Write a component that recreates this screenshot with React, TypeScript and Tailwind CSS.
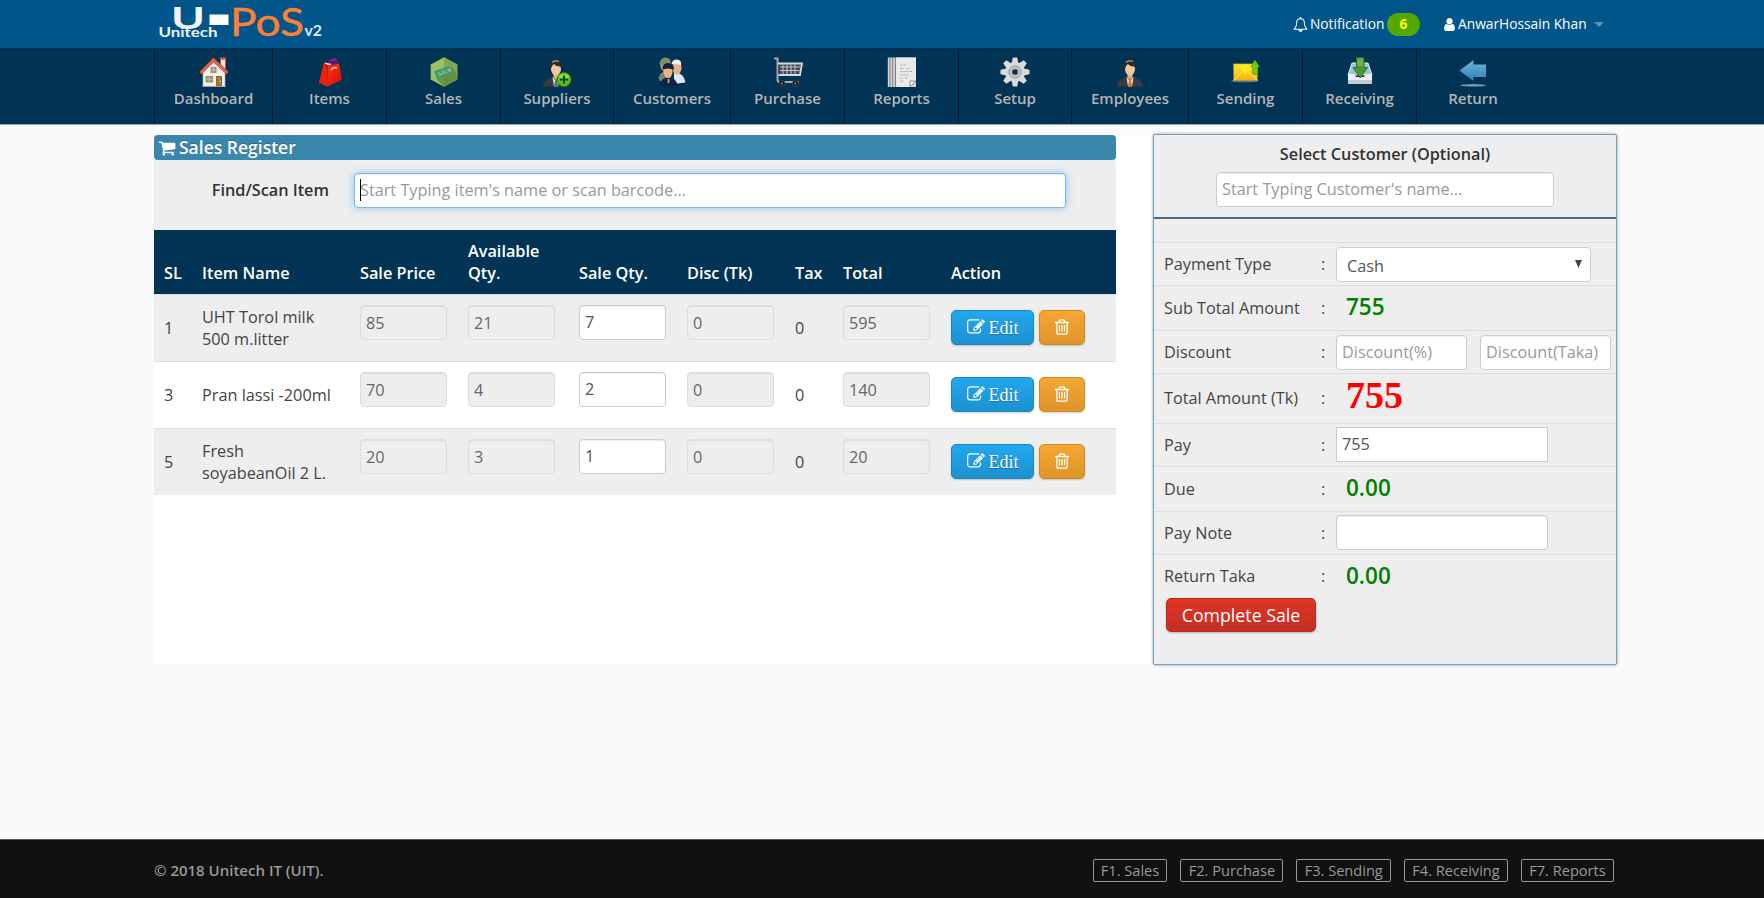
import React from "react";

type Children = { children?: React.ReactNode };

function Glyph({ d, className, box = "0 0 1792 1792" }: { d: string; className: string; box?: string }) {
  return (
    <svg viewBox={box} className={className} fill="currentColor">
      <path d={d} />
    </svg>
  );
}

const EDIT =
  "M888 1184l116-116-152-152-116 116v56h96v96h56zm440-720q-16-16-33 1l-350 350q-17 17-1 33t33-1l350-350q17-17 1-33zm80 594v190q0 119-84.5 203.5t-203.5 84.5h-832q-119 0-203.5-84.5t-84.5-203.5v-832q0-119 84.5-203.5t203.5-84.5h832q63 0 117 25 15 7 18 23 3 17-9 29l-49 49q-14 14-32 8-23-6-45-6h-832q-66 0-113 47t-47 113v832q0 66 47 113t113 47h832q66 0 113-47t47-113v-126q0-13 9-22l64-64q15-15 35-7t20 29zm-96-738l288 288-672 672h-288v-288zm444 132l-92 92-288-288 92-92q28-28 68-28t68 28l152 152q28 28 28 68t-28 68z";
const TRASH =
  "M704 736v576q0 14-9 23t-23 9h-64q-14 0-23-9t-9-23v-576q0-14 9-23t23-9h64q14 0 23 9t9 23zm256 0v576q0 14-9 23t-23 9h-64q-14 0-23-9t-9-23v-576q0-14 9-23t23-9h64q14 0 23 9t9 23zm256 0v576q0 14-9 23t-23 9h-64q-14 0-23-9t-9-23v-576q0-14 9-23t23-9h64q14 0 23 9t9 23zm128 724v-948h-896v948q0 22 7 40.5t14.5 27 10.5 8.5h832q3 0 10.5-8.5t14.5-27 7-40.5zm-672-1076h448l-48-117q-7-9-17-11h-317q-10 2-17 11zm928 32v64q0 14-9 23t-23 9h-96v948q0 83-47 143.5t-113 60.5h-832q-66 0-113-58.5t-47-141.5v-952h-96q-14 0-23-9t-9-23v-64q0-14 9-23t23-9h309l70-167q15-37 54-63t79-26h320q40 0 79 26t54 63l70 167h309q14 0 23 9t9 23z";
const CART =
  "M704 1536q0 52-38 90t-90 38-90-38-38-90 38-90 90-38 90 38 38 90zm896 0q0 52-38 90t-90 38-90-38-38-90 38-90 90-38 90 38 38 90zm128-1088v512q0 24-16.5 42.5t-40.5 21.5l-1044 122q13 60 13 70 0 16-24 64h920q26 0 45 19t19 45-19 45-45 19h-1024q-26 0-45-19t-19-45q0-11 8-31.5t16-36 21.5-40 15.5-29.5l-177-823h-204q-26 0-45-19t-19-45 19-45 45-19h256q16 0 28.5 6.5t19.5 15.5 13 24.5 8 26 5.5 29.5 4.5 26h1201q26 0 45 19t19 45z";
const USER =
  "M1536 1399q0 109-62.5 187t-150.5 78h-854q-88 0-150.5-78t-62.5-187q0-85 8.5-160.5t31.5-152 58.5-131 94-89 134.5-34.5q131 128 313 128t313-128q76 0 134.5 34.5t94 89 58.5 131 31.5 152 8.5 160.5zm-256-887q0 159-112.5 271.5t-271.5 112.5-271.5-112.5-112.5-271.5 112.5-271.5 271.5-112.5 271.5 112.5 112.5 271.5z";
const BELL =
  "M912 1696q0-16-16-16-59 0-101.5-42.5t-42.5-101.5q0-16-16-16t-16 16q0 73 51.5 124.5t124.5 51.5q16 0 16-16zm-666-288h1300q-266-300-266-832 0-51-24-105t-69-103-121.5-80.5-169.5-31.5-169.5 31.5-121.5 80.5-69 103-24 105q0 532-266 832zm1482 0q0 52-38 90t-90 38h-448q0 106-75 181t-181 75-181-75-75-181h-448q-52 0-90-38t-38-90q50-42 91-88t85-119.5 74.5-158.5 50-206 19.5-260q0-152 117-282.5t307-158.5q-8-19-8-39 0-40 28-68t68-28 68 28 28 68q0 20-8 39 190 28 307 158.5t117 282.5q0 139 19.5 260t50 206 74.5 158.5 85 119.5 91 88z";

function NavSvg({ children }: Children) {
  return (
    <svg viewBox="0 0 30 30" className="block size-[30px]">
      {children}
    </svg>
  );
}

const HouseIcon = () => (
  <NavSvg>
    <rect x="21.5" y="1" width="5" height="11" fill="#e9e4e0" stroke="#a9503c" strokeWidth="0.8" />
    <rect x="21" y="0.5" width="6" height="2.2" fill="#d4543a" />
    <path d="M4 14 14.5 3.5 26 14V29.5H4Z" fill="#f3f1ee" stroke="#b9b4ae" strokeWidth="0.6" />
    <path d="M0.5 15 14.5 0.8 29.5 15 27.5 17 14.5 5 2.5 17Z" fill="#e0664a" stroke="#a83f2a" strokeWidth="0.7" />
    <rect x="12" y="10.5" width="5" height="5" fill="#6f95bd" stroke="#b98a3c" strokeWidth="1.1" />
    <path d="M14.5 10.5v5M12 13h5" stroke="#e9dcc0" strokeWidth="0.6" />
    <rect x="7" y="19.5" width="6.5" height="5.5" fill="#6f95bd" stroke="#b98a3c" strokeWidth="1.1" />
    <path d="M10.2 19.5v5.500M7 22.200h6.500" stroke="#e9dcc0" strokeWidth="0.6" />
    <rect x="17.500" y="19.500" width="5" height="9.500" fill="#a87835" stroke="#7d5520" strokeWidth="0.8" />
    <circle cx="21.300" cy="24.500" r="0.700" fill="#f4dc8c" />
    <path d="M3 29.300h24" stroke="#a7a29a" strokeWidth="0.8" />
  </NavSvg>
);

const BagIcon = () => (
  <NavSvg>
    <defs>
      <linearGradient id="bag" x1="0" y1="0" x2="1" y2="1">
        <stop offset="0" stopColor="#ff3a16" />
        <stop offset="1" stopColor="#d40800" />
      </linearGradient>
    </defs>
    <path d="M11 5.500 21 1 24 7 13 9Z" fill="#5e1470" />
    <path d="M12 3.500 20 .8 23 4Z" fill="#7b2490" />
    <path d="M9.500 5.500 17 7l-4 2-4.500-1Z" fill="#f2ded8" />
    <path d="M9 6 4 25.500 12 29.500 14.500 9Z" fill="#b80d02" />
    <path d="M9 6 4 25.500 12 29.500 12 10Z" fill="#ee2209" />
    <path d="M13 9 24 6.500 27 23 12 29.500Z" fill="url(#bag)" />
    <path d="M16 13q3-3.500 6-2" fill="none" stroke="#ffd2c4" strokeWidth="1.600" />
  </NavSvg>
);

const SaleIcon = () => (
  <NavSvg>
    <path d="M15 0.300 28.300 7.500V22.500L15 29.700 1.700 22.500V7.500Z" fill="#98c35e" />
    <path d="M15 0.300 28.300 7.500V22.500L15 29.700Z" fill="#7ea950" />
    <path d="M7.500 22 22 9.500l3 3L28.300 19v3.500L15 29.700Z" fill="#5f8a3f" opacity=".8" />
    <g transform="rotate(-20 15 15)">
      <path d="M6 11h15l4 4-4 4H6Z" fill="#3a9682" />
      <circle cx="21.700" cy="15" r="1" fill="#9fcf9f" />
      <text x="8" y="17.200" fontSize="5.800" fontWeight="700" fontFamily="Open Sans" fill="#9cc45a">SALE</text>
    </g>
  </NavSvg>
);

function Person({ x = 0, tie = "#e06a2c" }: { x?: number; tie?: string }) {
  return (
    <g transform={"translate(" + x + " 0)"}>
      <path d="M2 29.500Q2 23 9 21.500L12 19H18L21 21.500Q28 23 28 29.500Z" fill="#3a3c40" />
      <path d="M11.500 20 15 24 18.500 20 17 29.500H13Z" fill="#e9e9ee" />
      <path d="M14 23h2l1 6.500h-4Z" fill={tie} />
      <path d="M12.500 16h5v4.500L15 23l-2.500-2.500Z" fill="#e6ac80" />
      <ellipse cx="15" cy="12" rx="5" ry="6.500" fill="#f5c79f" />
      <path d="M9 14Q7 2 15 2T21 14L19.500 9.500Q15 9.500 13 7 11 8.500 10.500 10Z" fill="#2a2a2c" />
      <path d="M11 5.500Q14 2.500 18 4.500" stroke="#8a8c8e" strokeWidth="1.600" fill="none" />
    </g>
  );
}

const SupplierIcon = () => (
  <NavSvg>
    <Person x={-1} tie="#5b6a7c" />
    <circle cx="22" cy="22.500" r="7" fill="#58b918" stroke="#2f7d08" strokeWidth="0.800" />
    <ellipse cx="22" cy="19.500" rx="5" ry="3" fill="#a6e763" opacity=".7" />
    <path d="M22 18.500v8M18 22.500h8" stroke="#174d05" strokeWidth="2" />
  </NavSvg>
);

const CustomersIcon = () => (
  <NavSvg>
    <path d="M1.500 21Q3 15 9 14l5 5v5H3Z" fill="#738b62" />
    <ellipse cx="8" cy="8.500" rx="4.500" ry="6" fill="#dc9a68" />
    <path d="M2.500 7Q3 .5 8.500 .5T14 7L3 8Z" fill="#77906a" />
    <path d="M17 16q10-1 11.500 9.500L17 27Z" fill="#dfe7f2" />
    <ellipse cx="20" cy="11" rx="4.500" ry="6.500" fill="#edb482" />
    <path d="M14.500 7.500Q15 2.500 20 2.500 25 3 24 8.500L19.500 7Z" fill="#f1f1f1" />
    <path d="M3 28.500Q3 21 11 20.500T20.500 28.500Q12 31 3 28.500Z" fill="#10224c" />
    <ellipse cx="11" cy="14.500" rx="4.500" ry="6.500" fill="#f0b184" />
    <path d="M5.500 12.500Q5 6 11 6t6 6.500L11 11.500Z" fill="#10224c" />
    <path d="M10.500 22h2v4h-2Z" fill="#c3a23c" />
  </NavSvg>
);

const PurchaseIcon = () => (
  <NavSvg>
    <path d="M1 1.500H4.500V22.500Q4.500 25 7 25H26" fill="none" stroke="#a9a9a9" strokeWidth="2" />
    <path d="M5 6.500H29L27 18H5.500" fill="#3e4a55" stroke="#d9d9d9" strokeWidth="1.800" />
    <path d="M7 10H27M7 13.500H26.500M10 7.500V17M14 7.500V17M18 7.500V17M22 7.500V17" stroke="#c4c4c4" strokeWidth="1" />
    <circle cx="9" cy="26.500" r="3" fill="#161616" stroke="#484848" />
    <circle cx="22.500" cy="26.500" r="3" fill="#161616" stroke="#484848" />
    <circle cx="9" cy="26.500" r=".9" fill="#aaa" />
    <circle cx="22.500" cy="26.500" r=".9" fill="#aaa" />
  </NavSvg>
);

const ReportsIcon = () => (
  <NavSvg>
    <path d="M.8 .5H29V30H.8Z" fill="#d0d0d0" />
    <path d="M3 .5V30M5.700 .5V30M8.500 .5V30" stroke="#6d6d6d" strokeWidth=".8" />
    <path d="M9 .5H29V24L23 30H9Z" fill="#e9e9e9" />
    <path d="M13 8h6M13 11.500h4m2 0h4M13 14.500h12M13 18h9M13 21h3m2 0h3M13 24h4" stroke="#a8a8a8" strokeWidth=".9" strokeDasharray="2.500 .8" />
    <path d="M23 29.500V24h6Z" fill="#fafafa" stroke="#777" strokeWidth=".8" />
  </NavSvg>
);

const GearIcon = () => (
  <NavSvg>
    <g fill="#dadada">
      {[0, 45, 90, 135].map((a) => (
        <path key={a} d="M12.800 .5h4.400l1.200 6h-6.800ZM12.800 29.500h4.400l1.200-6h-6.800Z" transform={"rotate(" + a + " 15 15)"} />
      ))}
      <circle cx="15" cy="15" r="10" />
    </g>
    <circle cx="15" cy="15" r="6" fill="#c8c8c8" stroke="#8d8d8d" strokeWidth="1" />
    <circle cx="15" cy="15" r="3" fill="#0a2f4c" stroke="#777" strokeWidth="1" />
  </NavSvg>
);

const EmployeeIcon = () => (
  <NavSvg>
    <Person />
  </NavSvg>
);

const SendingIcon = () => (
  <NavSvg>
    <defs>
      <linearGradient id="mail" x1="0" y1="0" x2="0" y2="1">
        <stop offset="0" stopColor="#fff02a" />
        <stop offset="1" stopColor="#f7ae08" />
      </linearGradient>
    </defs>
    <ellipse cx="14" cy="24" rx="14" ry="1.300" fill="#8095a5" opacity=".7" />
    <path d="M2.500 7H26.500V23.500H2.500Z" fill="url(#mail)" />
    <path d="M2.500 23.500 11 15.500M26.500 23.500 18 15.500" stroke="#fff1a0" strokeWidth=".9" />
    <path d="M2.500 7 14.500 18 26.500 7Z" fill="#ffe522" stroke="#f0bd10" strokeWidth=".7" />
    <path d="M24 3 28.500 10H26.500V17.500H21.500V10H19.500Z" fill="#72c71e" stroke="#4d9c0c" strokeWidth=".5" />
  </NavSvg>
);

const ReceivingIcon = () => (
  <NavSvg>
    <path d="M7 6H23L27 18H3Z" fill="#8fc9d8" stroke="#e5eef2" strokeWidth="1" />
    <path d="M3 17H9l2 3h8l2-3h6V27H3Z" fill="#eceff1" />
    <path d="M3 23H27V27H3Z" fill="#c3cbd0" />
    <path d="M11.500 .5H19V10.500H22.500L15.200 21 8 10.500H11.500Z" fill="#4d9630" stroke="#255f15" strokeWidth=".8" />
    <path d="M12.300 1.300h6V9h-6Z" fill="#8bb878" opacity=".65" />
  </NavSvg>
);

const ReturnIcon = () => (
  <NavSvg>
    <defs>
      <linearGradient id="back" x1="0" y1="0" x2="0" y2="1">
        <stop offset="0" stopColor="#6db4dc" />
        <stop offset="1" stopColor="#3283b4" />
      </linearGradient>
    </defs>
    <path d="M1.500 13.500 15.500 3V7.500H28V20H15.500V24Z" fill="url(#back)" />
    <ellipse cx="15" cy="28.300" rx="13" ry="1.200" fill="#8298a9" />
  </NavSvg>
);

const NAV = [
  { label: "Dashboard", icon: HouseIcon, width: "w-[118px]" },
  { label: "Items", icon: BagIcon, width: "w-[114px]" },
  { label: "Sales", icon: SaleIcon, width: "w-[114px]" },
  { label: "Suppliers", icon: SupplierIcon, width: "w-[113px]" },
  { label: "Customers", icon: CustomersIcon, width: "w-[117px]" },
  { label: "Purchase", icon: PurchaseIcon, width: "w-[114px]" },
  { label: "Reports", icon: ReportsIcon, width: "w-[114px]" },
  { label: "Setup", icon: GearIcon, width: "w-[113px]" },
  { label: "Employees", icon: EmployeeIcon, width: "w-[117px]" },
  { label: "Sending", icon: SendingIcon, width: "w-[114px]" },
  { label: "Receiving", icon: ReceivingIcon, width: "w-[114px]" },
  { label: "Return", icon: ReturnIcon, width: "w-[113px]" },
];

function Logo() {
  return (
    <svg viewBox="0 0 170 48" className="h-12 w-[170px] overflow-visible" fontFamily="Lato, sans-serif">
      <text x="17" y="28.500" fontSize="30" fontWeight="700" fill="#f4f6f8" textLength="34" lengthAdjust="spacingAndGlyphs">U</text>
      <rect x="55.500" y="14.500" width="19" height="10.500" fill="#fff" />
      <text x="76" y="36" fontSize="38" fill="#fb8135" stroke="#fb8135" strokeWidth=".4" textLength="74" lengthAdjust="spacingAndGlyphs">PoS</text>
      <text x="150.500" y="36" fontSize="14.500" fontWeight="700" fill="#dcebf5" textLength="17.500" lengthAdjust="spacingAndGlyphs">v2</text>
      <text x="4.500" y="37" fontSize="13.500" fontWeight="700" fill="#eef4f8" textLength="59" lengthAdjust="spacingAndGlyphs">Unitech</text>
    </svg>
  );
}

const FIELD =
  "block h-[35px] rounded-[4px] border border-[#ccc] bg-white px-[5px] pb-px text-[16.25px] text-[#555] shadow-[inset_0_1px_1px_rgba(0,0,0,0.075)] outline-none placeholder:text-[#999]";
const LOCKED =
  "block h-[35px] w-[87px] rounded-[4px] border border-[#ddd] bg-[#eee] px-[5px] text-[16.25px] text-[#666] shadow-[inset_0_1px_1px_rgba(0,0,0,0.075)] outline-none";

const ROWS = [
  { sl: 1, name: "UHT Torol milk 500 m.litter", price: "85", stock: "21", qty: "7", total: "595" },
  { sl: 3, name: "Pran lassi -200ml", price: "70", stock: "4", qty: "2", total: "140" },
  { sl: 5, name: "Fresh soyabeanOil 2 L.", price: "20", stock: "3", qty: "1", total: "20" },
];

const COLS = "grid grid-cols-[38px_158px_108px_111px_108px_108px_48px_108px_175px] *:pl-[10px]";

function SaleRow({ row, shaded }: { row: (typeof ROWS)[number]; shaded: boolean }) {
  return (
    <div className={COLS + " h-[67px] items-center border-t border-[#ddd] " + (shaded ? "bg-[#eee]" : "bg-white")}>
      <div>{row.sl}</div>
      <div className="pr-[14px] leading-[22px]">{row.name}</div>
      <div className="self-start pt-[10px]"><input className={LOCKED} readOnly defaultValue={row.price} /></div>
      <div className="self-start pt-[10px]"><input className={LOCKED} readOnly defaultValue={row.stock} /></div>
      <div className="self-start pt-[10px]"><input className={FIELD + " w-[87px]"} defaultValue={row.qty} /></div>
      <div className="self-start pt-[10px]"><input className={LOCKED} readOnly defaultValue="0" /></div>
      <div>0</div>
      <div className="self-start pt-[10px]"><input className={LOCKED} readOnly defaultValue={row.total} /></div>
      <div className="flex gap-[5px] pb-[2px] text-white">
        <button className="flex h-[35px] w-[83px] items-center justify-center gap-1 rounded-[5px] border border-[#1c86c0] bg-linear-to-b from-[#22a7ee] to-[#1d92d0] font-['Liberation_Serif',serif] text-[18px] shadow-[0_1px_2px_rgba(0,0,0,0.2)] [text-shadow:0_1px_1px_rgba(0,0,0,0.3)]">
          <Glyph d={EDIT} className="size-[18px]" />
          <span className="pt-[2px]">Edit</span>
        </button>
        <button className="flex h-[35px] w-[46px] items-center justify-center rounded-[5px] border border-[#cf8a22] bg-linear-to-b from-[#f5a733] to-[#dd952a] shadow-[0_1px_2px_rgba(0,0,0,0.2)]">
          <Glyph d={TRASH} className="size-[18px]" />
        </button>
      </div>
    </div>
  );
}

function PayRow({ label, height, children }: Children & { label: string; height: string }) {
  return (
    <div className={"flex items-center border-t border-[#ddd] pl-[10px] " + height}>
      <div className="w-[157px]">{label}</div>
      <div className="w-[15px]">:</div>
      {children}
    </div>
  );
}

const Amount = ({ children }: Children) => (
  <span className="pb-px pl-[10px] text-[22.5px] font-semibold text-[#008000]">{children}</span>
);

export default function App() {
  return (
    <div className="flex h-[898px] flex-col overflow-hidden bg-[#fafafa] font-['Open_Sans',sans-serif] text-[16.25px] leading-[22.5px] text-[#444]">
      <header className="h-12 bg-[#00568a]">
        <div className="ml-[154px] flex h-full w-[1464px] items-center justify-between pr-[14px]">
          <Logo />
          <div className="flex items-center text-[13.750px] font-medium text-white">
            <Glyph d={BELL} className="size-[15px]" />
            <span className="ml-[2px] w-[74px] whitespace-nowrap">Notification</span>
            <span className="ml-[3px] flex h-[23px] w-[33px] items-center justify-center rounded-[12px] bg-[#55a800] font-bold text-[#fbff00]">6</span>
            <Glyph d={USER} className="ml-[22px] size-[15px]" />
            <span className="ml-[1px] w-[129px] whitespace-nowrap">AnwarHossain Khan</span>
            <svg viewBox="0 0 10 5" className="ml-[7px] h-[5px] w-[10px]"><path d="M0 0h10L5 5Z" fill="#5d90b5" /></svg>
          </div>
        </div>
      </header>

      <nav className="h-[77px] border-t border-b border-t-[#002b4a] border-b-[#8fa3b2] bg-[#003354]">
        <div className="ml-[154px] flex h-full w-[1464px]">
          {NAV.map(({ label, icon: Icon, width }) => (
            <div key={label} className={"flex flex-col items-center border-l border-[#001d30] pt-[8px] text-[15px] font-semibold text-[#b5b5b5] " + width}>
              <Icon />
              <span>{label}</span>
            </div>
          ))}
        </div>
      </nav>

      <main className="mt-[9px] ml-[154px] flex w-[1464px]">
        <section className="mt-px h-[529px] w-[999px] bg-white">
          <div className="w-[962px]">
            <div className="bg-[#eee]">
              <h1 className="flex h-[25px] items-center gap-[3px] rounded-[4px] bg-[#3a87ad] pl-[4px] text-[17.500px] font-semibold text-white [text-shadow:0_-1px_0_rgba(0,0,0,0.25)]">
                <Glyph d={CART} className="size-[18px]" />
                Sales Register
              </h1>
              <div className="flex h-[70px] items-start pt-[13px]">
                <label className="w-[200px] pt-[6px] pr-[25px] text-right font-semibold text-[#333]">Find/Scan Item</label>
                <div className="relative w-[712px]">
                  <input
                    className="block h-[35px] w-full rounded-[4px] border border-[#74b9ef] bg-white px-[5px] pb-[1px] text-[16.250px] shadow-[inset_0_1px_1px_rgba(0,0,0,0.075),0_0_8px_rgba(82,168,236,0.6)] outline-none placeholder:text-[#999]"
                    placeholder="Start Typing item's name or scan barcode..."
                  />
                  <span className="absolute top-[6px] left-[6px] h-[22px] w-px bg-black" />
                </div>
              </div>
            </div>
            <div className={COLS + " h-[64px] items-end bg-[#003354] pb-[10px] leading-[22px] font-semibold text-white"}>
              <div>SL</div>
              <div>Item Name</div>
              <div>Sale Price</div>
              <div>Available Qty.</div>
              <div>Sale Qty.</div>
              <div>Disc (Tk)</div>
              <div>Tax</div>
              <div>Total</div>
              <div>Action</div>
            </div>
            {ROWS.map((row, i) => (
              <SaleRow key={row.sl} row={row} shaded={i % 2 === 0} />
            ))}
          </div>
        </section>

        <aside className="h-[531px] w-[464px] rounded-[2px] border border-[#7f9db5] bg-[#eee] shadow-[0_0_3px_rgba(0,51,84,0.5)]">
          <div className="flex h-[84px] flex-col items-center border-b-2 border-[#486a82] pt-[8px]">
            <div className="font-semibold text-[#333]">Select Customer (Optional)</div>
            <input className={FIELD + " mt-[6px] w-[338px]"} placeholder="Start Typing Customer's name..." />
          </div>
          <div className="h-[23px]" />
          <PayRow label="Payment Type" height="h-[43px]">
            <div className="flex h-[35px] w-[255px] items-center justify-between rounded-[4px] border border-[#ccc] bg-white pr-[8px] pl-[10px] text-[#555]">
              <span className="pt-[4px]">Cash</span>
              <svg viewBox="0 0 7 8" className="h-[8px] w-[7px]"><path d="M0 0h7L3.500 8Z" fill="#444" /></svg>
            </div>
          </PayRow>
          <PayRow label="Sub Total Amount" height="h-[45px]"><Amount>755</Amount></PayRow>
          <PayRow label="Discount" height="h-[43px]">
            <input className={FIELD + " w-[131px]"} placeholder="Discount(%)" />
            <input className={FIELD + " ml-[13px] w-[131px]"} placeholder="Discount(Taka)" />
          </PayRow>
          <PayRow label="Total Amount (Tk)" height="h-[50px]">
            <span className="pb-[7px] pl-[10px] font-['Liberation_Serif',serif] text-[38px] font-bold text-[#f00]">755</span>
          </PayRow>
          <PayRow label="Pay" height="h-[43px]">
            <input className="mb-[2px] h-[35px] w-[212px] border border-[#ccc] bg-white px-[5px] pb-px text-[#555] outline-none" defaultValue="755" />
          </PayRow>
          <PayRow label="Due" height="h-[45px]"><Amount>0.00</Amount></PayRow>
          <PayRow label="Pay Note" height="h-[43px]">
            <input className={FIELD + " mb-[2px] w-[212px]"} />
          </PayRow>
          <PayRow label="Return Taka" height="h-[44px]"><Amount>0.00</Amount></PayRow>
          <button className="ml-[12px] block h-[34px] w-[150px] rounded-[5px] border border-[#b52b20] bg-linear-to-b from-[#df3526] to-[#c22f24] text-[17.750px] text-white shadow-[0_1px_2px_rgba(0,0,0,0.25)]">
            Complete Sale
          </button>
        </aside>
      </main>

      <footer className="mt-auto h-[59px] border-t border-[#555] bg-[#111]">
        <div className="ml-[154px] flex h-full w-[1464px] items-center justify-between pt-[3px] pr-[4px] text-[14.600px] text-[#999]">
          <div className="text-[15px] font-semibold">© 2018 Unitech IT (UIT).</div>
          <div className="flex gap-[13px]">
            {["F1. Sales", "F2. Purchase", "F3. Sending", "F4. Receiving", "F7. Reports"].map((key) => (
              <span key={key} className="flex h-[23px] items-center rounded-[2px] border border-[#999] px-[7.250px]">{key}</span>
            ))}
          </div>
        </div>
      </footer>
    </div>
  );
}
